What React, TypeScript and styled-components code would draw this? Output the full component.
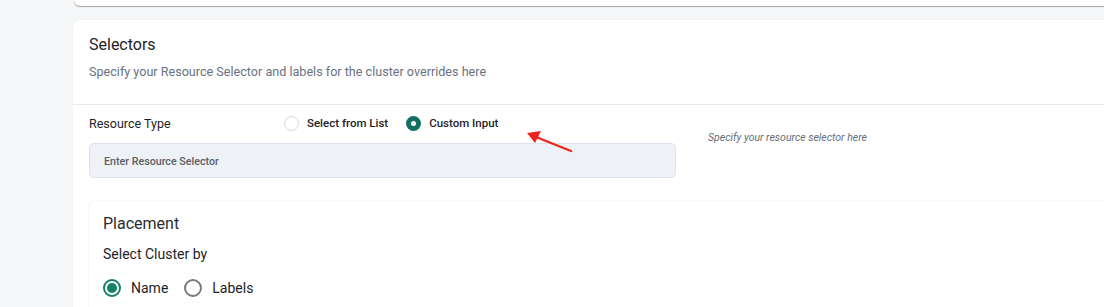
import React, { useState } from 'react';
import styled, { createGlobalStyle } from 'styled-components';

const GlobalStyle = createGlobalStyle`
  html, body {
    margin: 0;
    padding: 0;
    background: #f6f7f9;
    font-family: Roboto, 'Liberation Sans', Arial, sans-serif;
    color: #1f2328;
  }
`;

const Page = styled.div`
  position: relative;
  width: 1104px;
  height: 307px;
  overflow: hidden;
  padding-left: 73px;
  box-sizing: border-box;
`;

const TopCard = styled.div`
  width: 1100px;
  height: 6px;
  margin-left: 1px;
  background: #fff;
  border-radius: 0 0 6px 6px;
  box-shadow: 0 1px 1px rgba(0, 0, 0, 0.35);
`;

const Card = styled.section`
  width: 1100px;
  margin-top: 14px;
  background: #fff;
  border-radius: 6px 6px 0 0;
  box-shadow: 0 0 1px rgba(0, 0, 0, 0.12);
  padding-bottom: 40px;
`;

const CardHead = styled.div`
  padding: 15px 16px 0;
  height: 69px;
  border-bottom: 1px solid #e6e8eb;
`;

const Title = styled.h2`
  margin: 0;
  font-size: 16px;
  font-weight: 400;
  line-height: 19px;
  color: #1f2328;
`;

const Subtitle = styled.p`
  margin: 9px 0 0;
  font-size: 12.6px;
  line-height: 18px;
  color: #6b7280;
`;

const Body = styled.div`
  padding: 7px 16px 0;
`;

const FieldRow = styled.div`
  display: flex;
  align-items: flex-start;
`;

const FieldMain = styled.div`
  width: 587px;
`;

const LabelRow = styled.div`
  display: flex;
  align-items: center;
  height: 22px;
`;

const FieldLabel = styled.span`
  width: 195px;
  font-size: 12.5px;
  color: #1f2328;
`;

const RadioGroup = styled.div`
  display: flex;
  align-items: center;
  gap: 18px;
`;

const RadioOption = styled.label`
  display: flex;
  align-items: center;
  gap: 8px;
  font-size: 11.5px;
  font-weight: 500;
  color: #1f2328;
  cursor: pointer;
`;

const SmallDot = styled.span<{ $on: boolean }>`
  width: 15px;
  height: 15px;
  border-radius: 50%;
  box-sizing: border-box;
  border: ${(p) => (p.$on ? '5px solid #13705f' : '1px solid #d4dae3')};
  background: #fff;
`;

const Input = styled.input`
  display: block;
  width: 100%;
  height: 35px;
  margin-top: 9px;
  box-sizing: border-box;
  padding: 1px 14px 0;
  background: #eef1f6;
  border: 1px solid #dce2eb;
  border-radius: 5px;
  font-family: inherit;
  font-size: 10.7px;
  font-weight: 500;
  outline: none;
  &::placeholder {
    color: #5b5f66;
  }
`;

const Help = styled.div`
  margin: 19px 0 0 32px;
  font-size: 10.5px;
  font-style: italic;
  color: #666c75;
`;

const InnerCard = styled.div`
  margin-top: 23px;
  background: #fff;
  border-radius: 6px 0 0 0;
  box-shadow: 0 0 2px rgba(0, 0, 0, 0.1);
  padding: 13px 14px 20px;
`;

const InnerTitle = styled.h3`
  margin: 0;
  font-size: 16px;
  font-weight: 400;
  line-height: 19px;
  color: #2a2d31;
`;

const SubLabel = styled.div`
  margin-top: 12px;
  font-size: 14px;
  line-height: 18px;
  color: #1f2328;
`;

const MuiGroup = styled.div`
  display: flex;
  align-items: center;
  gap: 16px;
  margin-top: 16px;
`;

const MuiOption = styled.label`
  display: flex;
  align-items: center;
  gap: 10px;
  font-size: 14px;
  color: #1f2328;
  cursor: pointer;
`;

const MuiRing = styled.span<{ $on: boolean }>`
  position: relative;
  width: 18px;
  height: 18px;
  border-radius: 50%;
  box-sizing: border-box;
  border: 2px solid ${(p) => (p.$on ? '#13806a' : '#7a7a7a')};
  &::after {
    content: '';
    display: ${(p) => (p.$on ? 'block' : 'none')};
    position: absolute;
    inset: 2px;
    border-radius: 50%;
    background: #13806a;
  }
`;

const Arrow = styled.svg`
  position: absolute;
  left: 520px;
  top: 126px;
`;

export default function App() {
  const [mode, setMode] = useState<'list' | 'custom'>('custom');
  const [by, setBy] = useState<'name' | 'labels'>('name');

  return (
    <Page>
      <GlobalStyle />
      <TopCard />
      <Card>
        <CardHead>
          <Title>Selectors</Title>
          <Subtitle>Specify your Resource Selector and labels for the cluster overrides here</Subtitle>
        </CardHead>
        <Body>
          <FieldRow>
            <FieldMain>
              <LabelRow>
                <FieldLabel>Resource Type</FieldLabel>
                <RadioGroup>
                  <RadioOption onClick={() => setMode('list')}>
                    <SmallDot $on={mode === 'list'} />
                    Select from List
                  </RadioOption>
                  <RadioOption onClick={() => setMode('custom')}>
                    <SmallDot $on={mode === 'custom'} />
                    Custom Input
                  </RadioOption>
                </RadioGroup>
              </LabelRow>
              <Input placeholder="Enter Resource Selector" />
            </FieldMain>
            <Help>Specify your resource selector here</Help>
          </FieldRow>
          <InnerCard>
            <InnerTitle>Placement</InnerTitle>
            <SubLabel>Select Cluster by</SubLabel>
            <MuiGroup>
              <MuiOption onClick={() => setBy('name')}>
                <MuiRing $on={by === 'name'} />
                Name
              </MuiOption>
              <MuiOption onClick={() => setBy('labels')}>
                <MuiRing $on={by === 'labels'} />
                Labels
              </MuiOption>
            </MuiGroup>
          </InnerCard>
        </Body>
      </Card>
      {/* annotation arrow */}
      <Arrow width="60" height="34" viewBox="0 0 60 34">
        <line x1="51" y1="25" x2="16" y2="11" stroke="#f0241c" strokeWidth="2.4" strokeLinecap="round" />
        <polygon points="7,7 21,5 15,17" fill="#f0241c" />
      </Arrow>
    </Page>
  );
}
